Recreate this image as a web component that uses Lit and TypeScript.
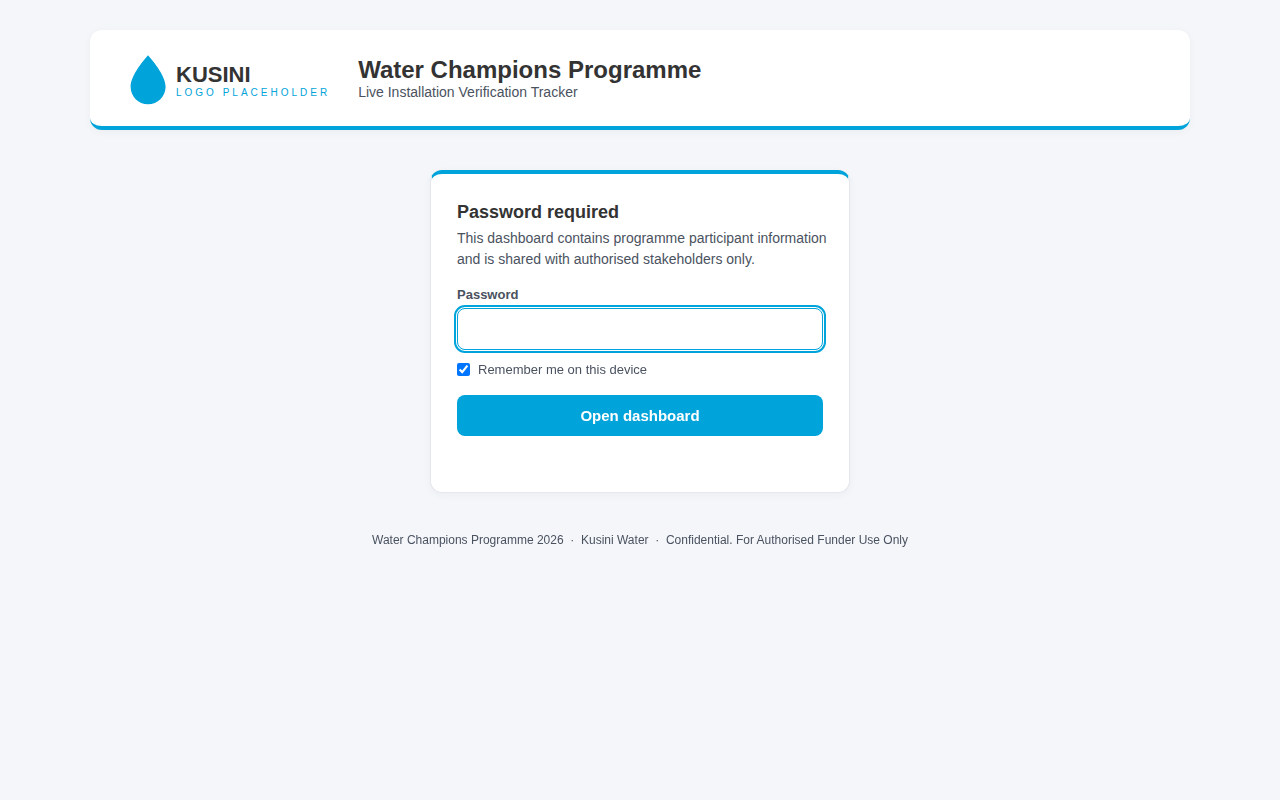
import { LitElement, html, css } from "lit";
import { customElement, query } from "lit/decorators.js";

@customElement("site-header")
class SiteHeader extends LitElement {
  static styles = css`
    :host {
      display: block;
    }
    .header {
      display: flex;
      align-items: center;
      gap: 28px;
      padding: 18px 40px;
      background: #fff;
      border-bottom: 4px solid #00a3da;
      border-radius: 12px;
      box-shadow: 0 2px 8px rgba(0, 0, 0, 0.04);
    }
    .brand {
      display: flex;
      align-items: center;
      gap: 10px;
    }
    .drop {
      display: block;
      width: 36px;
      height: 60px;
    }
    .words {
      padding-top: 6px;
    }
    .name {
      font-size: 22px;
      line-height: 24px;
      font-weight: 700;
      color: #333;
    }
    .tag {
      font-size: 10px;
      line-height: 12px;
      letter-spacing: 3px;
      color: #00a3da;
      white-space: nowrap;
    }
    .title {
      margin: 0;
      font-size: 24px;
      line-height: 28px;
      font-weight: 700;
      color: #333;
    }
    .subtitle {
      margin: 0;
      font-size: 14px;
      line-height: 16px;
      color: #4a5260;
    }
  `;

  render() {
    return html`
      <header class="header">
        <div class="brand">
          <svg class="drop" viewBox="0 0 36 60" aria-hidden="true">
            <path
              fill="#00a3da"
              d="M18 7.2C15.5 10.3 0.6 26.5 0.6 38.8C0.6 48.5 8.3 56.300 18 56.300S35.600 48.500 35.600 38.800C35.600 26.500 20.500 10.300 18 7.200Z"
            />
          </svg>
          <div class="words">
            <div class="name">KUSINI</div>
            <div class="tag">LOGO PLACEHOLDER</div>
          </div>
        </div>
        <div>
          <h1 class="title">Water Champions Programme</h1>
          <p class="subtitle">Live Installation Verification Tracker</p>
        </div>
      </header>
    `;
  }
}

@customElement("login-card")
class LoginCard extends LitElement {
  @query("#password") password!: HTMLInputElement;

  static styles = css`
    :host {
      display: block;
    }
    .card {
      box-sizing: border-box;
      max-width: 420px;
      margin: 0 auto;
      padding: 26px 18px 56px 26px;
      background: #fff;
      border: 1px solid #e5e7ee;
      border-top: 4px solid #00a3da;
      border-radius: 12px;
      box-shadow: 0 2px 8px rgba(0, 0, 0, 0.04);
    }
    .form {
      padding-right: 8px;
    }
    .heading {
      margin: 0 0 4px;
      font-size: 18px;
      line-height: 24px;
      font-weight: 700;
      color: #333;
    }
    .text {
      margin: 0 0 18px;
      font-size: 14px;
      line-height: 21px;
      color: #4a5260;
    }
    .label {
      display: block;
      margin-bottom: 6px;
      font-size: 13px;
      line-height: 14px;
      font-weight: 700;
      color: #4a5260;
    }
    .field {
      display: block;
      box-sizing: border-box;
      width: 100%;
      height: 42px;
      padding: 0 12px;
      font: inherit;
      color: #333;
      background: #fff;
      border: 1px solid #cfd4dd;
      border-radius: 8px;
    }
    .field:focus {
      border-color: #00a3da;
      outline: 2px solid #00a3da;
      outline-offset: 1px;
    }
    .remember {
      display: flex;
      align-items: center;
      gap: 8px;
      margin: 12px 0 18px;
      font-size: 13px;
      line-height: 15px;
      color: #4a5260;
    }
    .check {
      width: 13px;
      height: 13px;
      margin: 0;
    }
    .submit {
      display: block;
      width: 100%;
      padding: 12px;
      font-family: inherit;
      font-size: 15px;
      line-height: 17px;
      font-weight: 700;
      color: #fff;
      background: #00a3da;
      border: 0;
      border-radius: 8px;
      cursor: pointer;
    }
  `;

  firstUpdated() {
    this.password.focus();
  }

  private onSubmit(event: Event) {
    event.preventDefault();
  }

  render() {
    return html`
      <section class="card">
        <h2 class="heading">Password required</h2>
        <p class="text">
          This dashboard contains programme participant information and is
          shared with authorised stakeholders only.
        </p>
        <form class="form" @submit=${this.onSubmit}>
          <label class="label" for="password">Password</label>
          <input
            class="field"
            id="password"
            type="password"
            autocomplete="current-password"
          />
          <label class="remember">
            <input class="check" type="checkbox" checked />
            <span>Remember me on this device</span>
          </label>
          <button class="submit" type="submit">Open dashboard</button>
        </form>
      </section>
    `;
  }
}

@customElement("app-root")
class AppRoot extends LitElement {
  static styles = css`
    :host {
      display: block;
      box-sizing: border-box;
      min-height: 100vh;
      padding: 30px 20px;
      font-family: "Liberation Sans", Arial, sans-serif;
      background: #f4f6fa;
    }
    .page {
      display: flex;
      flex-direction: column;
      gap: 40px;
      max-width: 1100px;
      margin: 0 auto;
    }
    .footer {
      font-size: 12px;
      line-height: 14px;
      text-align: center;
      color: #4a5260;
    }
  `;

  render() {
    return html`
      <div class="page">
        <site-header></site-header>
        <main><login-card></login-card></main>
        <footer class="footer">
          Water Champions Programme 2026 &nbsp;·&nbsp; Kusini Water
          &nbsp;·&nbsp; Confidential. For Authorised Funder Use Only
        </footer>
      </div>
    `;
  }
}
